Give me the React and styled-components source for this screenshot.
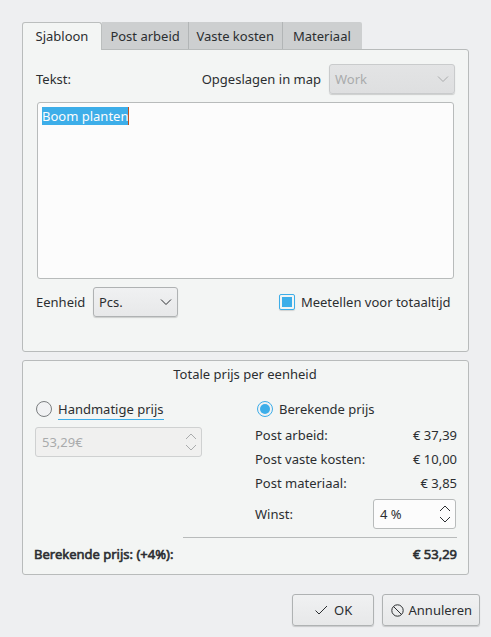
import React from "react";
import styled, { createGlobalStyle, css } from "styled-components";

const Global = createGlobalStyle`
  * { box-sizing: border-box; }
  body {
    margin: 0;
    background: #eeeff1;
    color: #2b2e31;
    font-family: "Noto Sans", sans-serif;
    font-size: 13px;
    line-height: 18px;
  }
`;

const Dialog = styled.main`
  width: 491px;
  height: 637px;
  padding: 22px 11px 10px 22px;
  display: flex;
  flex-direction: column;
  overflow: hidden;
  white-space: nowrap;
`;

const Tabs = styled.div`
  display: flex;
  height: 27px;
  width: 447px;
`;

const Tab = styled.div`
  width: ${(p) => p.$width}px;
  height: 27px;
  padding: 5px 0 0 ${(p) => p.$indent}px;
  background: #cdcfd0;
  border-right: ${(p) => (p.$last ? "0" : "1px solid #b2b5b6")};
  border-top-right-radius: ${(p) => (p.$last ? "2px" : "0")};
  ${(p) =>
    p.$active &&
    css`
      height: 28px;
      padding-top: 4px;
      position: relative;
      background: #f3f5f4;
      border: 1px solid #bbbebe;
      border-bottom: 0;
      border-radius: 3px 3px 0 0;
    `}
`;

const Panel = styled.section`
  width: 447px;
  height: ${(p) => p.$height}px;
  border: 1px solid #b8bbbb;
  border-radius: 3px;
  background: #f3f5f4;
`;

const TabPanel = styled(Panel)`
  border-top-left-radius: 0;
  padding: 14px 13px 0;
`;

const Row = styled.div`
  display: flex;
  align-items: center;
  height: ${(p) => p.$height}px;
`;

const Spacer = styled.div`
  flex: 1;
`;

const Label = styled.span`
  margin-right: ${(p) => p.$gap || 0}px;
`;

const UnitLabel = styled.span`
  width: 57px;
`;

const Select = styled.div`
  display: flex;
  align-items: center;
  justify-content: space-between;
  width: ${(p) => p.$width}px;
  height: 30px;
  padding: 0 5px;
  border: 1px solid ${(p) => (p.$disabled ? "#c9cbcc" : "#afb2b3")};
  border-radius: 3px;
  color: ${(p) => (p.$disabled ? "#a9abac" : "#2b2e31")};
  background: ${(p) =>
    p.$disabled
      ? "linear-gradient(#e3e4e5, #dedfe0)"
      : "linear-gradient(#f0f1f2, #e7e8e9)"};
  box-shadow: 0 1px 1px rgba(0, 0, 0, 0.16);
`;

const TextArea = styled.div`
  width: 417px;
  height: 177px;
  margin: 8px 0 8px 1px;
  padding: 4px;
  border: 1px solid #b8bbbb;
  border-radius: 3px;
  background: #fcfcfc;
`;

const Selection = styled.span`
  display: inline-block;
  height: 18px;
  color: #fcfcfc;
  background: #3daee9;
  border-right: 1px solid #c2511b;
`;

const CheckBox = styled.span`
  display: grid;
  place-items: center;
  width: 16px;
  height: 16px;
  margin-right: 6px;
  border: 1px solid #3daee9;
  border-radius: 2px;
  background: #f3f5f4;
  box-shadow: 0 1px 1px rgba(0, 0, 0, 0.14);
  &::after {
    content: "";
    width: 10px;
    height: 10px;
    background: #3daee9;
  }
`;

const Radio = styled.span`
  display: grid;
  place-items: center;
  width: 16px;
  height: 16px;
  margin-right: 6px;
  border: 1px solid ${(p) => (p.$checked ? "#3daee9" : "#7b7e80")};
  border-radius: 50%;
  background: #f1f2f3;
  &::after {
    content: "";
    width: 10px;
    height: 10px;
    border-radius: 50%;
    background: ${(p) => (p.$checked ? "#3daee9" : "transparent")};
  }
`;

const Focused = styled.span`
  width: 106px;
  height: 22px;
  padding-top: 2px;
  border-bottom: 1px solid #3daee9;
`;

const PricePanel = styled(Panel)`
  margin-top: 8px;
  padding: 4px 11px 0;
`;

const Title = styled.div`
  text-align: center;
  height: 18px;
  padding-right: 1px;
  margin-bottom: 17px;
`;

const Columns = styled.div`
  display: flex;
  justify-content: space-between;
  height: 137px;
`;

const Manual = styled.div`
  width: 168px;
`;

const Calculated = styled.div`
  width: 202px;
`;

const RadioRow = styled(Row)`
  height: 18px;
  margin-bottom: 9px;
  padding-left: ${(p) => p.$indent}px;
`;

const PriceRow = styled(Row)`
  height: 24px;
  justify-content: space-between;
`;

const PriceRows = styled.div`
  margin-top: -4px;
`;

const Spin = styled.div`
  display: flex;
  align-items: center;
  justify-content: space-between;
  width: ${(p) => p.$width}px;
  height: 30px;
  margin-left: ${(p) => (p.$disabled ? 1 : 0)}px;
  padding: 0 4px 0 6px;
  border: 1px solid ${(p) => (p.$disabled ? "#cfd1d1" : "#b8bbbb")};
  border-radius: 3px;
  color: ${(p) => (p.$disabled ? "#a9abac" : "#2b2e31")};
  background: ${(p) => (p.$disabled ? "#f0f0ef" : "#fcfcfc")};
`;

const ProfitRow = styled(Row)`
  height: 30px;
  margin: 4px 1px 0 0;
  justify-content: space-between;
`;

const Divider = styled.div`
  height: 1px;
  margin-left: 149px;
  background: #b8bbbb;
`;

const Total = styled(Row)`
  height: 32px;
  justify-content: space-between;
  -webkit-text-stroke: 0.6px #2b2e31;
`;

const Actions = styled.footer`
  display: flex;
  justify-content: flex-end;
  gap: 8px;
  margin-top: 19px;
`;

const Button = styled.button`
  display: flex;
  align-items: center;
  gap: ${(p) => p.$gap}px;
  width: ${(p) => p.$width}px;
  height: 32px;
  padding: 0 0 0 ${(p) => p.$indent}px;
  font: inherit;
  color: inherit;
  border: 1px solid #afb2b3;
  border-radius: 3px;
  background: linear-gradient(#f0f1f2, #e7e8e9);
  box-shadow: 0 1px 1px rgba(0, 0, 0, 0.16);
`;

const Icon = styled.svg`
  display: block;
  flex: none;
  fill: none;
  stroke: currentColor;
  stroke-width: 1;
`;

const Chevron = () => (
  <Icon width="12" height="8" viewBox="0 0 12 8">
    <path d="M1 1.5 6 6.5 11 1.5" />
  </Icon>
);

const Stepper = () => (
  <Icon width="12" height="20" viewBox="0 0 12 20">
    <path d="M1 7 6 2 11 7M1 13 6 18 11 13" />
  </Icon>
);

const prices = [
  ["Post arbeid:", "€ 37,39"],
  ["Post vaste kosten:", "€ 10,00"],
  ["Post materiaal:", "€ 3,85"],
];

export default function App() {
  return (
    <Dialog>
      <Global />
      <Tabs>
        <Tab $active $width={80} $indent={12.5}>Sjabloon</Tab>
        <Tab $width={87} $indent={8.4}>Post arbeid</Tab>
        <Tab $width={94} $indent={7.4}>Vaste kosten</Tab>
        <Tab $last $width={79} $indent={10}>Materiaal</Tab>
      </Tabs>
      <TabPanel $height={303}>
        <Row $height={30}>
          <Label>Tekst:</Label>
          <Spacer />
          <Label $gap={8}>Opgeslagen in map</Label>
          <Select $disabled $width={126}>
            Work
            <Chevron />
          </Select>
        </Row>
        <TextArea>
          <Selection>Boom planten</Selection>
        </TextArea>
        <Row $height={30}>
          <UnitLabel>Eenheid</UnitLabel>
          <Select $width={85}>
            Pcs.
            <Chevron />
          </Select>
          <Spacer />
          <CheckBox />
          <Label $gap={4.5}>Meetellen voor totaaltijd</Label>
        </Row>
      </TabPanel>
      <PricePanel $height={215}>
        <Title>Totale prijs per eenheid</Title>
        <Columns>
          <Manual>
            <RadioRow $indent={2}>
              <Radio />
              <Focused>Handmatige prijs</Focused>
            </RadioRow>
            <Spin $disabled $width={167}>
              53,29€
              <Stepper />
            </Spin>
          </Manual>
          <Calculated>
            <RadioRow $indent={2}>
              <Radio $checked />
              <Label>Berekende prijs</Label>
            </RadioRow>
            <PriceRows>
              {prices.map(([name, value]) => (
                <PriceRow key={name}>
                  <span>{name}</span>
                  <span>{value}</span>
                </PriceRow>
              ))}
            </PriceRows>
            <ProfitRow>
              <span>Winst:</span>
              <Spin $width={83}>
                4 %
                <Stepper />
              </Spin>
            </ProfitRow>
          </Calculated>
        </Columns>
        <Divider />
        <Total>
          <span>Berekende prijs: (+4%):</span>
          <span>€ 53,29</span>
        </Total>
      </PricePanel>
      <Actions>
        <Button $width={82} $indent={22} $gap={6}>
          <Icon width="13" height="12" viewBox="0 0 13 12">
            <path d="M0.5 6.5 4 10 12 2" />
          </Icon>
          OK
        </Button>
        <Button $width={98} $indent={7.5} $gap={5}>
          <Icon width="13" height="13" viewBox="0 0 13 13">
            <circle cx="6.5" cy="6.5" r="5.7" />
            <path d="M2.5 2.5 10.5 10.5" />
          </Icon>
          Annuleren
        </Button>
      </Actions>
    </Dialog>
  );
}
